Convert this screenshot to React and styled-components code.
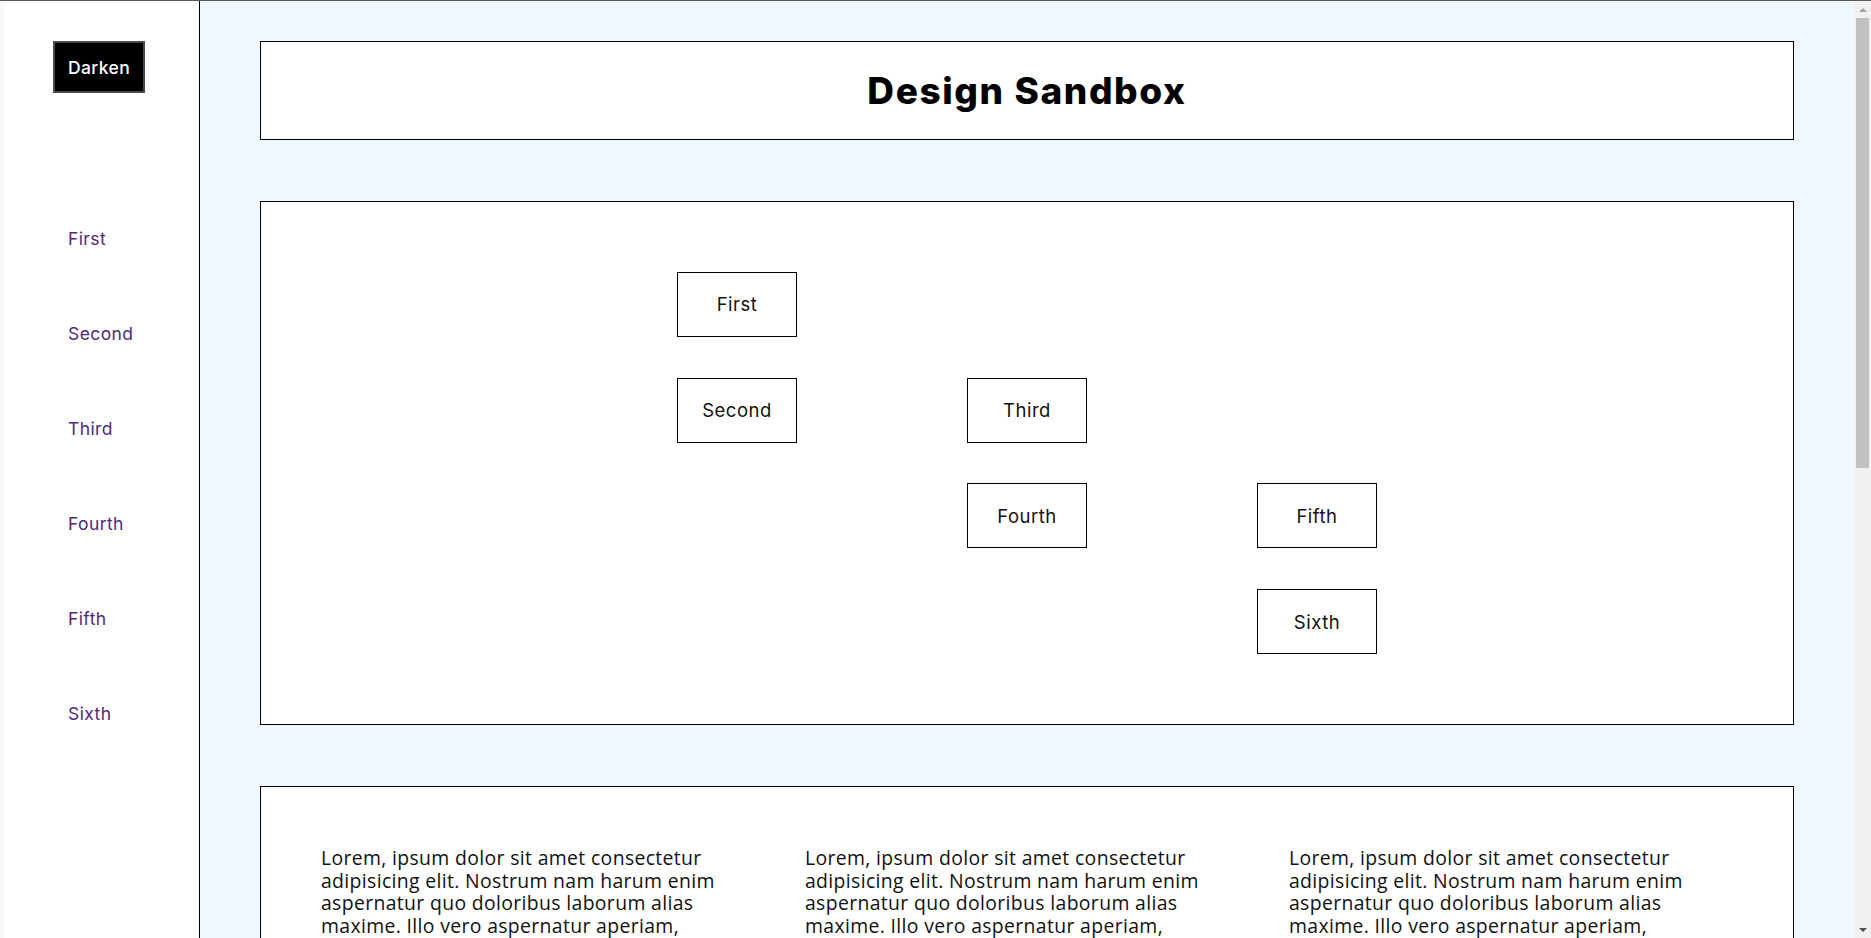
import React from "react";
import styled, { createGlobalStyle } from "styled-components";

const GlobalStyle = createGlobalStyle`
  * { box-sizing: border-box; }
  html, body { margin: 0; padding: 0; }
  body {
    font-family: Inter, "Noto Sans", "Liberation Sans", sans-serif;
    color: #111;
    background: #f0f8ff;
    border-top: 1px solid #5a5a5a;
  }
`;

const Layout = styled.div`
  display: grid;
  grid-template-columns: 200px 1fr;
  min-height: 100vh;
`;

const Sidebar = styled.aside`
  position: sticky;
  top: 0;
  align-self: start;
  height: 100vh;
  background: #fff;
  border-right: 1px solid #000;
  box-shadow: inset 7px 0 7px -5px rgba(0, 0, 0, 0.05);
  display: flex;
  flex-direction: column;
  align-items: flex-start;
  padding: 40px 0 0 53px;
`;

const DarkenButton = styled.button`
  width: 92px;
  height: 52px;
  background: #000;
  color: #fff;
  border: 2px solid #4a4a4a;
  font-family: inherit;
  font-size: 17.5px;
  font-weight: 500;
  letter-spacing: 0.4px;
  cursor: pointer;
`;

const Nav = styled.nav`
  display: flex;
  flex-direction: column;
  gap: 71px;
  margin-top: 134px;
  padding-left: 15px;
`;

const NavLink = styled.a`
  display: block;
  line-height: 24px;
  font-size: 17.5px;
  letter-spacing: 0.4px;
  color: #4d2a7c;
  text-decoration: none;
`;

const Main = styled.main`
  display: flex;
  flex-direction: column;
  gap: 61px;
  padding: 40px 77px 60px 60px;
`;

const Panel = styled.section`
  background: #fff;
  border: 1px solid #000;
`;

const HeaderPanel = styled(Panel)`
  height: 99px;
  display: flex;
  align-items: center;
  justify-content: center;
`;

const Title = styled.h1`
  margin: 0;
  font-size: 37px;
  font-weight: 800;
  letter-spacing: 1.6px;
  color: #000;
`;

const GridPanel = styled(Panel)`
  height: 524px;
  display: grid;
  grid-template-columns: repeat(3, 120px);
  grid-template-rows: repeat(4, 65px);
  column-gap: 170px;
  row-gap: 40.7px;
  justify-content: center;
  align-content: center;
`;

const Cell = styled.div`
  grid-column: ${(p) => p.$col};
  grid-row: ${(p) => p.$row};
  border: 1px solid #000;
  background: #fff;
  display: flex;
  align-items: center;
  justify-content: center;
  font-size: 18.5px;
  letter-spacing: 0.5px;
  color: #111;
`;

const TextPanel = styled(Panel)`
  padding: 60px;
  display: grid;
  grid-template-columns: repeat(3, 1fr);
  column-gap: 40px;
`;

const Para = styled.p`
  margin: 0;
  padding-right: 10px;
  font-family: "Open Sans", "Noto Sans", sans-serif;
  font-size: 19.4px;
  line-height: 22.6px;
  letter-spacing: 0.35px;
  color: #111;
`;

const Scrollbar = styled.div`
  position: fixed;
  top: 1px;
  right: 0;
  bottom: 0;
  width: 17px;
  background: #f1f1f1;
  display: flex;
  flex-direction: column;
  align-items: center;
`;

const ScrollArrow = styled.div`
  width: 17px;
  height: 17px;
  display: flex;
  align-items: center;
  justify-content: center;
  &::before {
    content: "";
    border-left: 4px solid transparent;
    border-right: 4px solid transparent;
    ${(p) =>
      p.$down
        ? `border-top: 4px solid ${p.$color};`
        : `border-bottom: 4px solid ${p.$color};`}
  }
`;

const ScrollTrack = styled.div`
  flex: 1;
  width: 100%;
  display: flex;
  justify-content: center;
`;

const ScrollThumb = styled.div`
  width: 13px;
  height: 450px;
  background: #c1c1c1;
`;

const cells = [
  { label: "First", col: 1, row: 1 },
  { label: "Second", col: 1, row: 2 },
  { label: "Third", col: 2, row: 2 },
  { label: "Fourth", col: 2, row: 3 },
  { label: "Fifth", col: 3, row: 3 },
  { label: "Sixth", col: 3, row: 4 },
];

const lorem =
  "Lorem, ipsum dolor sit amet consectetur adipisicing elit. Nostrum nam harum enim aspernatur quo doloribus laborum alias maxime. Illo vero aspernatur aperiam, quibusdam voluptatum eveniet similique dolores nesciunt fugiat facilis eaque sapiente, tempora consequuntur odit accusantium. Quisquam dignissimos, sunt autem reiciendis minus excepturi inventore nisi, natus laudantium placeat cum doloremque. Provident consectetur vitae perferendis dolorum corporis officia ipsa obcaecati, asperiores sequi quas nostrum velit. Repellendus quaerat ducimus, omnis ab tenetur ratione maiores error accusamus iusto, minima expedita rerum itaque animi! Delectus at voluptates numquam fuga eligendi, possimus cupiditate ullam repudiandae laboriosam adipisci modi illum deserunt. Incidunt nemo ex beatae voluptatibus repellat sint assumenda tempore architecto, quo distinctio saepe odio placeat. Sapiente ipsum alias veritatis culpa, harum molestiae magni temporibus consequatur blanditiis labore vel officiis aut eius quisquam.";

export default function App() {
  return (
    <>
      <GlobalStyle />
      <Layout>
        <Sidebar>
          <DarkenButton type="button">Darken</DarkenButton>
          <Nav>
            {["First", "Second", "Third", "Fourth", "Fifth", "Sixth"].map((n) => (
              <NavLink key={n} href={`#${n.toLowerCase()}`}>
                {n}
              </NavLink>
            ))}
          </Nav>
        </Sidebar>
        <Main>
          <HeaderPanel>
            <Title>Design Sandbox</Title>
          </HeaderPanel>
          <GridPanel>
            {cells.map((c) => (
              <Cell key={c.label} $col={c.col} $row={c.row}>
                {c.label}
              </Cell>
            ))}
          </GridPanel>
          <TextPanel>
            <Para>{lorem}</Para>
            <Para>{lorem}</Para>
            <Para>{lorem}</Para>
          </TextPanel>
        </Main>
      </Layout>
      <Scrollbar aria-hidden="true">
        <ScrollArrow $color="#a3a3a3" />
        <ScrollTrack>
          <ScrollThumb />
        </ScrollTrack>
        <ScrollArrow $down $color="#505050" />
      </Scrollbar>
    </>
  );
}
